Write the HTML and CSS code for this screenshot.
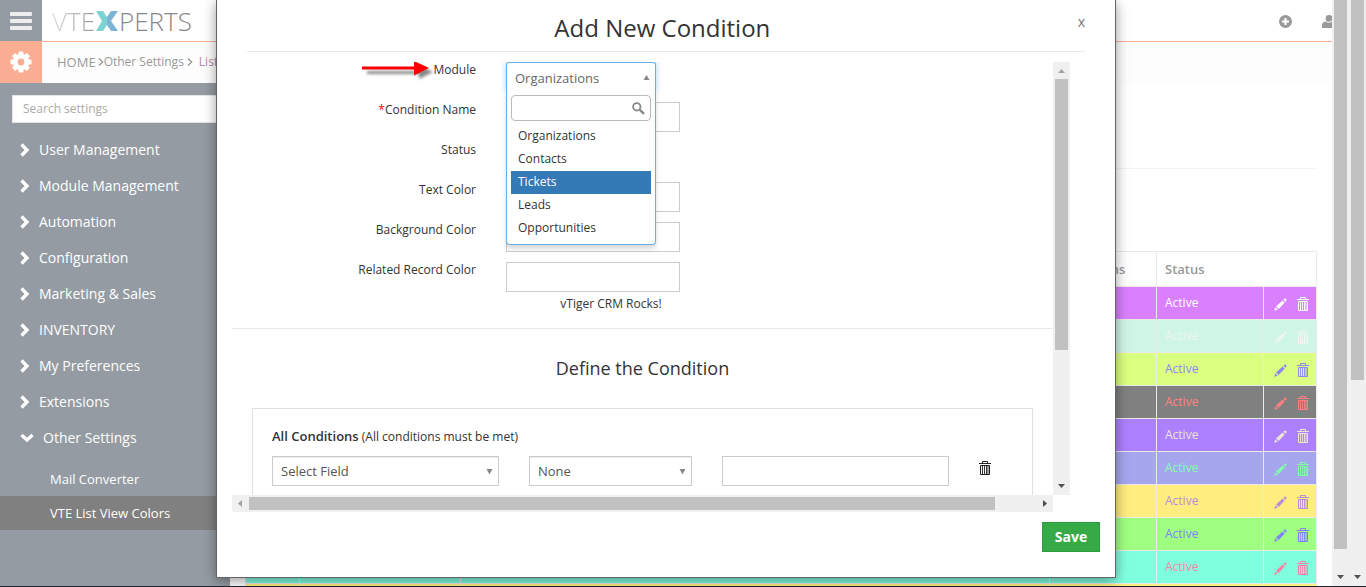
FILE: index.html
```html
<!DOCTYPE html>
<html lang="en">

<head>
    <meta charset="UTF-8">
    <meta name="viewport" content="width=device-width, initial-scale=1.0">
    <title>VTE List View Colors</title>
    <link rel="stylesheet" href="styles.css">
</head>

<body>
    <!-- shared icons -->
    <svg class="sprite" aria-hidden="true">
        <symbol id="pencil" viewBox="0 0 13 13">
            <path d="M0.3 12.7L1.3 9.2L3.8 11.7Z M2 8.4L8.6 2.4L10.7 4.5L4.7 11Z M9.4 1.7L10.6 0.6Q11.2 0.2 11.8 0.8L12.4 1.4Q12.9 2 12.4 2.5L11.4 3.7Z" fill="currentColor" />
        </symbol>
        <symbol id="trash" viewBox="0 0 12 14">
            <path d="M3.5 2.5V0.5H8.5V2.5M0 2.5H12M1.5 4.5H10.5V13.5H1.5Z" fill="none" stroke="currentColor" />
            <path d="M3.5 5V13M5.5 5V13M7.5 5V13M9 5V13" fill="none" stroke="currentColor" stroke-width="0.9" />
        </symbol>
        <symbol id="right" viewBox="0 0 10 14">
            <path d="M1.5 1.5L7 7L1.5 12.5" fill="none" stroke="currentColor" stroke-width="3.4" />
        </symbol>
        <symbol id="down" viewBox="0 0 14 10">
            <path d="M1.5 2L7 7L12.5 2" fill="none" stroke="currentColor" stroke-width="3.4" />
        </symbol>
        <symbol id="thin" viewBox="0 0 6 8">
            <path d="M1 0.5L4.7 4L1 7.5" fill="none" stroke="currentColor" stroke-width="1.3" />
        </symbol>
    </svg>

    <div class="screen">
        <div class="app">
            <header class="topbar">
                <button class="menu-btn" aria-label="Menu"><i></i><i></i><i></i></button>
                <a class="logo" href="#">
                    <span class="logo-vte">VTE</span>
                    <svg width="22" height="20" viewBox="0 0 22 20" aria-hidden="true">
                        <path d="M0 0H7L11 6V14L7 20H0L6 10Z" fill="#7dd3d3" />
                        <path d="M22 0H15L11 6V14L15 20H22L15 10Z" fill="#7db3d6" />
                    </svg>
                    <span class="logo-perts">PERTS</span>
                </a>
                <div class="top-icons">
                    <svg width="13" height="13" viewBox="0 0 13 13">
                        <circle cx="6.5" cy="6.5" r="6.5" fill="#999" />
                        <path d="M6.5 3V10M3 6.5H10" stroke="#fff" stroke-width="2.2" />
                    </svg>
                    <svg width="14" height="13" viewBox="0 0 14 13">
                        <path d="M0 13V10Q0 7 3.5 6.5Q7 9 10.5 6.5Q14 7 14 10V13Z" fill="#999" />
                        <circle cx="7" cy="3.4" r="3.4" fill="#999" />
                    </svg>
                </div>
            </header>

            <div class="crumbbar">
                <a class="gear" href="#" aria-label="Settings">
                    <svg width="22" height="22" viewBox="-11 -11 22 22">
                        <g fill="#fff">
                            <rect x="-2.5" y="-10.5" width="5" height="21" rx="1" />
                            <rect x="-2.5" y="-10.5" width="5" height="21" rx="1" transform="rotate(45)" />
                            <rect x="-2.5" y="-10.5" width="5" height="21" rx="1" transform="rotate(90)" />
                            <rect x="-2.5" y="-10.5" width="5" height="21" rx="1" transform="rotate(135)" />
                            <circle r="8" />
                        </g>
                        <circle r="3.4" fill="#f9ae93" />
                    </svg>
                </a>
                <nav class="crumbs">
                    <a class="home" href="#">HOME</a>
                    <svg width="6" height="8"><use href="#thin" /></svg>
                    <a href="#">Other Settings</a>
                    <svg class="sep" width="6" height="8"><use href="#thin" /></svg>
                    <a class="current" href="#">List View Colors</a>
                </nav>
            </div>

            <div class="main">
                <aside class="sidebar">
                    <input class="search" type="text" placeholder="Search settings" aria-label="Search settings">
                    <nav class="side-nav">
                        <a href="#"><svg width="10" height="14"><use href="#right" /></svg>User Management</a>
                        <a href="#"><svg width="10" height="14"><use href="#right" /></svg>Module Management</a>
                        <a href="#"><svg width="10" height="14"><use href="#right" /></svg>Automation</a>
                        <a href="#"><svg width="10" height="14"><use href="#right" /></svg>Configuration</a>
                        <a href="#"><svg width="10" height="14"><use href="#right" /></svg>Marketing &amp; Sales</a>
                        <a href="#"><svg width="10" height="14"><use href="#right" /></svg>INVENTORY</a>
                        <a href="#"><svg width="10" height="14"><use href="#right" /></svg>My Preferences</a>
                        <a href="#"><svg width="10" height="14"><use href="#right" /></svg>Extensions</a>
                        <a href="#"><svg width="14" height="10"><use href="#down" /></svg>Other Settings</a>
                    </nav>
                    <nav class="sub-nav">
                        <a href="#">Mail Converter</a>
                        <a class="active" href="#">VTE List View Colors</a>
                    </nav>
                </aside>

                <section class="content">
                    <hr>
                    <table class="colors">
                        <colgroup>
                            <col class="c1"><col class="c2"><col><col class="c4"><col class="c4"><col class="c6">
                        </colgroup>
                        <thead>
                            <tr><th></th><th></th><th></th><th>Conditions</th><th colspan="2">Status</th></tr>
                        </thead>
                        <tbody>
                            <tr class="r1"><td></td><td></td><td></td><td></td><td>Active</td><td class="act"><svg width="13" height="13"><use href="#pencil" /></svg><svg width="12" height="14"><use href="#trash" /></svg></td></tr>
                            <tr class="r2"><td></td><td></td><td></td><td></td><td>Active</td><td class="act"><svg width="13" height="13"><use href="#pencil" /></svg><svg width="12" height="14"><use href="#trash" /></svg></td></tr>
                            <tr class="r3"><td></td><td></td><td></td><td></td><td>Active</td><td class="act"><svg width="13" height="13"><use href="#pencil" /></svg><svg width="12" height="14"><use href="#trash" /></svg></td></tr>
                            <tr class="r4"><td></td><td></td><td></td><td></td><td>Active</td><td class="act"><svg width="13" height="13"><use href="#pencil" /></svg><svg width="12" height="14"><use href="#trash" /></svg></td></tr>
                            <tr class="r5"><td></td><td></td><td></td><td></td><td>Active</td><td class="act"><svg width="13" height="13"><use href="#pencil" /></svg><svg width="12" height="14"><use href="#trash" /></svg></td></tr>
                            <tr class="r6"><td></td><td></td><td></td><td></td><td>Active</td><td class="act"><svg width="13" height="13"><use href="#pencil" /></svg><svg width="12" height="14"><use href="#trash" /></svg></td></tr>
                            <tr class="r7"><td></td><td></td><td></td><td></td><td>Active</td><td class="act"><svg width="13" height="13"><use href="#pencil" /></svg><svg width="12" height="14"><use href="#trash" /></svg></td></tr>
                            <tr class="r8"><td></td><td></td><td></td><td></td><td>Active</td><td class="act"><svg width="13" height="13"><use href="#pencil" /></svg><svg width="12" height="14"><use href="#trash" /></svg></td></tr>
                            <tr class="r9"><td></td><td></td><td></td><td></td><td>Active</td><td class="act"><svg width="13" height="13"><use href="#pencil" /></svg><svg width="12" height="14"><use href="#trash" /></svg></td></tr>
                            <tr class="r7"><td></td><td></td><td></td><td></td><td></td><td></td></tr>
                        </tbody>
                    </table>
                </section>
            </div>

            <!-- popup -->
            <div class="modal" role="dialog" aria-labelledby="modal-title">
                <div class="modal-head">
                    <h3 id="modal-title">Add New Condition</h3>
                    <button class="close">x</button>
                </div>
                <div class="scroller">
                    <div class="pane">
                        <form class="fields">
                            <div class="field">
                                <label for="module">Module
                                    <svg class="arrow" width="74" height="24" viewBox="0 0 74 24" aria-hidden="true">
                                        <path class="arrow-shadow" d="M5 13H57V7L71 14L57 21V16H5Z" />
                                        <path d="M0 8.5H52V3L67 10L52 17.5V11.5H0Z" fill="#f00" />
                                    </svg>
                                </label>
                                <div class="combo">
                                    <select id="module" class="combo-value">
                                        <option selected>Organizations</option>
                                        <option>Contacts</option>
                                        <option>Tickets</option>
                                        <option>Leads</option>
                                        <option>Opportunities</option>
                                    </select>
                                    <svg class="caret" width="7" height="6"><path d="M0.5 5L3.5 0L6.5 5Z" fill="#888" /></svg>
                                    <div class="combo-menu">
                                        <div class="combo-search">
                                            <input type="text" aria-label="Search modules">
                                            <svg width="13" height="13" viewBox="0 0 13 13">
                                                <circle cx="4.8" cy="4.8" r="3.7" fill="none" stroke="#888" stroke-width="1.8" />
                                                <path d="M7.8 7.8L12 11.8" stroke="#888" stroke-width="2.4" />
                                            </svg>
                                        </div>
                                        <ul role="listbox" aria-label="Modules">
                                            <li role="option">Organizations</li>
                                            <li role="option">Contacts</li>
                                            <li role="option" class="on" aria-selected="true">Tickets</li>
                                            <li role="option">Leads</li>
                                            <li role="option">Opportunities</li>
                                        </ul>
                                    </div>
                                </div>
                            </div>
                            <div class="field">
                                <label for="cname"><span class="req">*</span>Condition Name</label>
                                <input id="cname" type="text">
                            </div>
                            <div class="field">
                                <label for="status">Status</label>
                                <input id="status" class="check" type="checkbox" checked>
                            </div>
                            <div class="field">
                                <label for="tcolor">Text Color</label>
                                <input id="tcolor" type="text">
                            </div>
                            <div class="field">
                                <label for="bcolor">Background Color</label>
                                <input id="bcolor" type="text">
                            </div>
                            <div class="field">
                                <label for="rcolor">Related Record Color</label>
                                <input id="rcolor" type="text">
                            </div>
                            <p class="preview">vTiger CRM Rocks!</p>
                        </form>
                        <h4>Define the Condition</h4>
                        <div class="panel">
                            <p><strong>All Conditions</strong> (All conditions must be met)</p>
                            <div class="cond">
                                <div class="pick wide">
                                    <select aria-label="Field"><option>Select Field</option></select>
                                    <svg class="caret" width="7" height="6"><path d="M0.5 0H6.5L3.5 5.5Z" fill="#888" /></svg>
                                </div>
                                <div class="pick">
                                    <select aria-label="Comparator"><option>None</option></select>
                                    <svg class="caret" width="7" height="6"><path d="M0.5 0H6.5L3.5 5.5Z" fill="#888" /></svg>
                                </div>
                                <input class="wide" type="text" aria-label="Value">
                                <button class="del" type="button" aria-label="Delete condition"><svg width="12" height="14"><use href="#trash" /></svg></button>
                            </div>
                        </div>
                    </div>
                    <div class="vbar">
                        <svg width="17" height="17"><path d="M5 11H12L8.5 7Z" fill="#a3a3a3" /></svg>
                        <div class="thumb"></div>
                        <svg width="17" height="17"><path d="M5 6H12L8.5 10Z" fill="#505050" /></svg>
                    </div>
                    <div class="hbar">
                        <svg width="17" height="17"><path d="M10 5V12L6 8.5Z" fill="#a3a3a3" /></svg>
                        <div class="thumb"></div>
                        <svg width="17" height="17"><path d="M7 5V12L11 8.5Z" fill="#505050" /></svg>
                    </div>
                </div>
                <div class="modal-foot">
                    <button class="save">Save</button>
                </div>
            </div>
        </div>

        <div class="vbar page-bar">
            <div class="thumb"></div>
            <svg width="17" height="17"><path d="M5 6H12L8.5 10Z" fill="#505050" /></svg>
        </div>
        <div class="vbar page-bar outer">
            <div class="thumb"></div>
            <svg width="17" height="17"><path d="M5 6H12L8.5 10Z" fill="#505050" /></svg>
        </div>
    </div>
</body>

</html>
```
FILE: styles.css
```css
* {
    margin: 0;
    padding: 0;
    box-sizing: border-box;
}

body {
    font-family: "Open Sans", "Noto Sans", sans-serif;
    font-size: 13px;
    line-height: 20px;
    color: #333;
    background: #fff;
    overflow: hidden;
}

a {
    color: inherit;
    text-decoration: none;
}

button, input, select {
    font: inherit;
    color: inherit;
}

button {
    border: 0;
    background: none;
}

svg {
    display: block;
    flex: none;
}

.sprite {
    position: absolute;
    width: 0;
    height: 0;
}

.screen {
    display: flex;
    height: 100vh;
    border-bottom: 1px solid #1c222b;
}

.app {
    position: relative;
    flex: 1;
    min-width: 0;
    display: flex;
    flex-direction: column;
    overflow: hidden;
}

/* top bar */
.topbar {
    display: flex;
    align-items: stretch;
    flex: none;
    height: 42px;
    overflow: hidden;
    border-bottom: 1px solid #f9ae93;
}

.menu-btn {
    width: 42px;
    display: flex;
    flex-direction: column;
    align-items: center;
    justify-content: center;
    gap: 3px;
    background: #949ba2;
}

.menu-btn i {
    width: 22px;
    height: 4px;
    border-radius: 1px;
    background: #ededed;
}

.logo {
    display: flex;
    align-items: center;
    gap: 1px;
    padding-left: 10px;
    font-size: 26px;
    font-weight: 300;
    line-height: 40px;
}

.logo-vte {
    background: linear-gradient(90deg, #ddd, #999);
    -webkit-background-clip: text;
    background-clip: text;
    color: transparent;
}

.logo-perts {
    color: #888;
}

.top-icons {
    display: flex;
    align-items: center;
    gap: 30px;
    margin: 0 -4px 0 auto;
    padding-top: 2px;
}

/* breadcrumbs */
.crumbbar {
    display: flex;
    flex: none;
    height: 41px;
    background: #fdfdfd;
    color: #999;
}

.gear {
    width: 42px;
    display: flex;
    align-items: center;
    justify-content: center;
    padding-bottom: 2px;
    background: #f9ae93;
}

.crumbs {
    display: flex;
    align-items: center;
    padding: 0 0 2px 15px;
    font-size: 12px;
    white-space: nowrap;
}

.crumbs .home {
    margin-right: 2px;
    font-size: 13px;
}

.crumbs .sep {
    margin: 0 6px 0 3px;
}

.crumbs .current {
    color: #b08cb0;
}

/* sidebar */
.main {
    flex: 1;
    min-height: 0;
    display: flex;
}

.sidebar {
    flex: none;
    width: 230px;
    padding-top: 12px;
    background: #949ba2;
    color: #fff;
}

.search {
    display: block;
    width: 206px;
    height: 28px;
    margin: 0 12px 9px;
    padding: 0 10px 2px;
    border: 1px solid #e5e5e5;
    background: #fff;
    color: #555;
    font-size: 12px;
}

.search::placeholder {
    color: #aaa;
}

.side-nav {
    font-size: 14px;
    padding-bottom: 6px;
}

.side-nav a {
    display: flex;
    align-items: center;
    gap: 9px;
    height: 36px;
    padding-left: 20px;
}

.sub-nav a {
    display: block;
    padding-left: 50px;
    line-height: 34px;
}

.sub-nav .active {
    background: #808080;
}

/* table behind the popup */
.content {
    flex: 1;
    min-width: 0;
    padding: 85px 15px 0;
}

.content hr {
    border: 0;
    border-top: 1px solid #f3f3f3;
    margin-bottom: 82px;
}

.colors {
    width: 100%;
    table-layout: fixed;
    border-collapse: collapse;
}

.colors .c1 {
    width: 54px;
}

.colors .c2 {
    width: 161px;
}

.colors .c4 {
    width: 107px;
}

.colors .c6 {
    width: 53px;
}

.colors th, .colors td {
    height: 33px;
    padding: 0 8px;
    border: 1px solid #eaeaea;
    text-align: left;
    vertical-align: middle;
    line-height: 20px;
}

.colors th {
    height: 35px;
    color: #999;
    font-weight: 600;
}

.colors td {
    padding-bottom: 1px;
    font-size: 12px;
}

.colors .act svg {
    display: inline-block;
    vertical-align: middle;
}

.colors td.act {
    padding: 1px 0 0 10px;
    white-space: nowrap;
}

.colors .act svg + svg {
    margin-left: 10px;
}

.r1 { background: #da80ff; color: #fff; }
.r2 { background: #cff5e7; color: #eef7ef; }
.r3 { background: #dbff80; color: #8c88f0; }
.r4 { background: #808080; color: #ff8080; }
.r5 { background: #ad80ff; color: #ebe4d0; }
.r6 { background: #a6a6ee; color: #80ffaa; }
.r7 { background: #ffed80; color: #b78fdb; }
.r8 { background: #9fff80; color: #8080ff; }
.r9 { background: #80ffdf; color: #f586a8; }

/* popup */
.modal {
    position: absolute;
    top: 0;
    left: 50%;
    width: 900px;
    margin-left: -450px;
    background: #fff;
    border: 1px solid #62666b;
    border-top: 0;
    box-shadow: 0 3px 12px rgba(0, 0, 0, 0.4);
}

.modal-head {
    display: flex;
    align-items: center;
    height: 52px;
    margin: 0 30px 10px;
    border-bottom: 1px solid #eaeaea;
}

.modal-head h3 {
    flex: 1;
    padding-top: 4px;
    font-size: 24px;
    font-weight: 400;
    line-height: 32px;
    text-align: center;
}

.close {
    align-self: flex-start;
    padding-top: 12px;
    color: #777;
    font-size: 14px;
}

.scroller {
    display: grid;
    grid-template-columns: 1fr 17px;
    grid-template-rows: 433px 17px;
    margin: 0 45px 0 15px;
}

.pane {
    overflow: hidden;
}

.field {
    display: flex;
    gap: 30px;
    height: 40px;
    font-size: 12px;
}

.field label {
    position: relative;
    width: 244px;
    height: 16px;
    line-height: 16px;
    text-align: right;
}

.field .req {
    color: #f00;
}

.pane input[type="text"], .pane select {
    height: 30px;
    padding: 0 8px;
    border: 1px solid #ccc;
    background: #fff;
    appearance: none;
    outline: 0;
}

.field > input[type="text"] {
    width: 174px;
}

.check {
    width: 13px;
    height: 13px;
    margin-top: 6px;
}

.arrow {
    position: absolute;
    top: -4px;
    right: 40px;
}

.arrow-shadow {
    fill: #888;
    filter: blur(1.5px);
}

/* open drop-down */
.combo, .pick {
    position: relative;
    width: 150px;
}

.combo .combo-value {
    width: 100%;
    border: 1px solid #66afe9;
    border-bottom: 0;
    border-radius: 3px 3px 0 0;
    box-shadow: 0 0 6px rgba(102, 175, 233, 0.6);
    color: #666;
    font-size: 13px;
}

.caret {
    position: absolute;
    top: 13px;
    right: 6px;
    pointer-events: none;
}

.combo-menu {
    position: absolute;
    top: 29px;
    left: 0;
    right: 0;
    z-index: 2;
    padding: 4px;
    border: 1px solid #66afe9;
    border-top: 0;
    border-radius: 0 0 4px 4px;
    background: #fff;
    box-shadow: 0 4px 5px rgba(0, 0, 0, 0.15);
}

.combo-search {
    position: relative;
    margin-bottom: 4px;
}

.combo-search svg {
    position: absolute;
    top: 7px;
    right: 6px;
}

.pane .combo-search input {
    display: block;
    width: 100%;
    height: 26px;
    border: 1px solid #bbb;
    border-radius: 4px;
}

.combo-menu ul {
    list-style: none;
}

.combo-menu li {
    padding: 0 7px 1px;
    line-height: 22px;
}

.combo-menu .on {
    background: #337ab7;
    color: #fff;
}

.preview {
    width: 210px;
    margin: -10px 0 0 274px;
    font-size: 12px;
    line-height: 24px;
    text-align: center;
}

.fields {
    padding-bottom: 12px;
    border-bottom: 1px solid #eaeaea;
}

.pane h4 {
    padding: 28px 0;
    font-size: 18px;
    font-weight: 400;
    line-height: 23px;
    text-align: center;
}

.panel {
    height: 200px;
    margin: 0 20px;
    padding: 18px 19px;
    border: 1px solid #e0e0e0;
}

.panel p {
    font-size: 12px;
    margin-bottom: 9px;
}

.panel strong {
    font-size: 13px;
    font-weight: 600;
    line-height: 16px;
}

.cond {
    display: flex;
    gap: 30px;
}

.pick {
    width: 163px;
    color: #555;
}

.cond .wide {
    width: 227px;
}

.pick select {
    width: 100%;
    box-shadow: inset 0 1px 1px rgba(0, 0, 0, 0.08);
}

.del {
    height: 24px;
    color: #222;
}

/* scroll bars */
.vbar, .hbar {
    display: flex;
    background: #f0f0f0;
}

.vbar {
    flex-direction: column;
}

.thumb {
    background: #c1c1c1;
}

.vbar .thumb {
    height: 271px;
    margin: 0 2px;
}

.hbar .thumb {
    width: 746px;
    margin: 2px 0;
}

.vbar svg:last-child {
    margin-top: auto;
}

.hbar svg:last-child {
    margin-left: auto;
}

.page-bar {
    flex: none;
    width: 17px;
}

.page-bar .thumb {
    height: 549px;
}

.outer .thumb {
    height: 380px;
}

.modal-foot {
    display: flex;
    justify-content: flex-end;
    padding: 10px 15px 25px;
}

.save {
    width: 58px;
    height: 30px;
    background: #35aa47;
    border: 1px solid #2f9a40;
    color: #fff;
    font-size: 14px;
    font-weight: 700;
}
```
